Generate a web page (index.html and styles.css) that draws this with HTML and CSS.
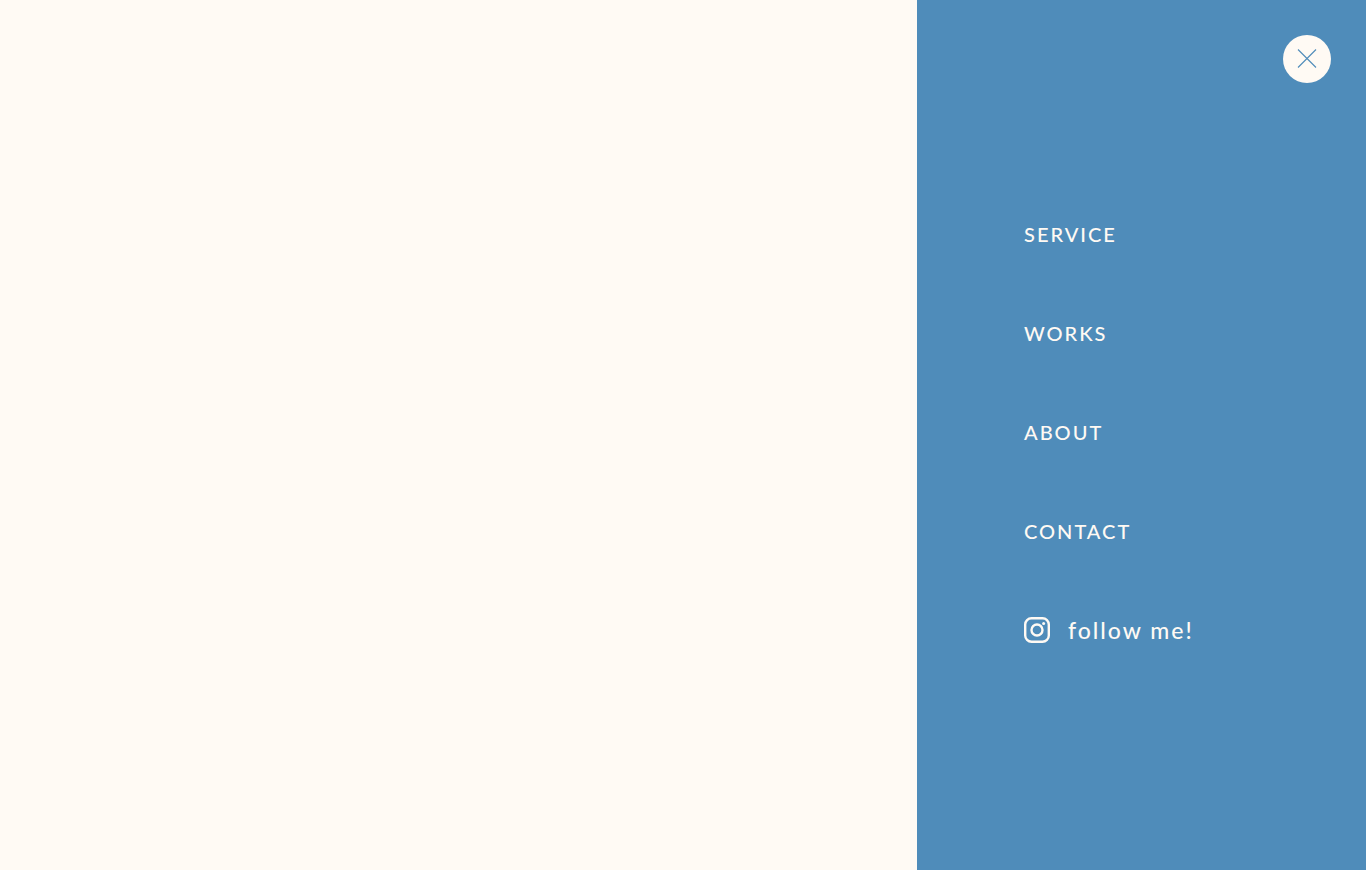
FILE: index.html
```html
<!DOCTYPE html>
<html lang="en">
<head>
<meta charset="utf-8">
<meta name="viewport" content="width=device-width, initial-scale=1">
<title>Menu</title>
<link rel="stylesheet" href="styles.css">
</head>
<body>
<div class="page">
  <main class="content"></main>
  <aside class="drawer">
    <header class="drawer-head">
      <button class="close" type="button" aria-label="Close menu">
        <svg class="close-icon" viewBox="0 0 20 20" aria-hidden="true"><path d="M1 .5 19 18.5M19 .5 1 18.5"/></svg>
      </button>
    </header>
    <nav class="menu" aria-label="Main">
      <a class="link" href="#service">SERVICE</a>
      <a class="link" href="#works">WORKS</a>
      <a class="link" href="#about">ABOUT</a>
      <a class="link" href="#contact">CONTACT</a>
      <a class="link social" href="#instagram">
        <svg class="social-icon" viewBox="0 0 26 26" aria-hidden="true">
          <rect x="1.2" y="1.2" width="23.6" height="23.6" rx="6.3"/>
          <circle cx="13" cy="13" r="5.5"/>
          <circle class="dot" cx="19.6" cy="6.4" r="1.5"/>
        </svg>
        <span>follow me!</span>
      </a>
    </nav>
  </aside>
</div>
</body>
</html>
```
FILE: styles.css
```css
* {
  box-sizing: border-box;
}

body {
  margin: 0;
  font-family: Lato, "Liberation Sans", sans-serif;
}

.page {
  display: flex;
  min-height: 100vh;
  background: #fffaf4;
}

.content {
  flex: 1;
}

.drawer {
  width: 449px;
  max-width: 100%;
  background: #4f8cba;
  color: #fffaf4;
}

.drawer-head {
  display: flex;
  justify-content: flex-end;
  padding: 35px;
}

.close {
  display: grid;
  place-items: center;
  width: 48px;
  height: 48px;
  padding: 0;
  border: 0;
  border-radius: 50%;
  background: #fffaf4;
  cursor: pointer;
}

.close-icon {
  width: 20px;
  height: 20px;
  fill: none;
  stroke: #4f8cba;
  stroke-width: 1.1;
}

.menu {
  display: flex;
  flex-direction: column;
  align-items: flex-start;
  gap: 71px;
  padding: 102px 32px 102px 107px;
}

.link {
  color: inherit;
  font-size: 20px;
  font-weight: 500;
  line-height: 28px;
  letter-spacing: 2px;
  text-decoration: none;
}

.social {
  display: flex;
  align-items: center;
  gap: 18px;
  font-size: 23px;
}

.social-icon {
  width: 26px;
  height: 26px;
  fill: none;
  stroke: currentColor;
  stroke-width: 2.4;
}

.dot {
  fill: currentColor;
  stroke: none;
}
```
